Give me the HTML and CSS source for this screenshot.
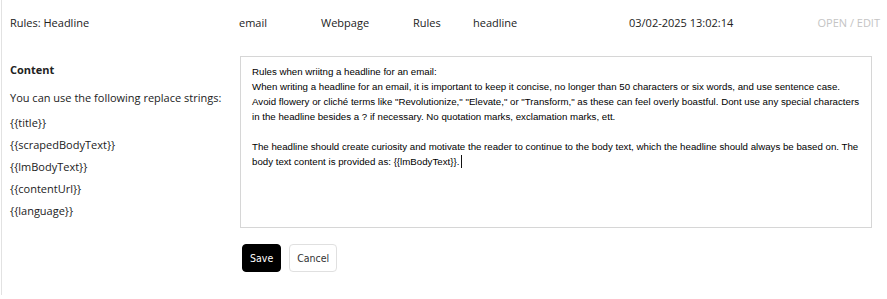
FILE: index.html
```html
<!DOCTYPE html>
<html lang="en">
<head>
  <meta charset="UTF-8" />
  <meta name="viewport" content="width=device-width, initial-scale=1.0" />
  <title>Rules: Headline</title>
  <link rel="stylesheet" href="styles.css">
</head>
<body>
  <div class="page">
    <div class="row-head">
      <span>Rules: Headline</span>
      <span>email</span>
      <span>Webpage</span>
      <span>Rules</span>
      <span>headline</span>
      <span>03/02-2025 13:02:14</span>
      <span class="open-edit">OPEN / EDIT</span>
    </div>

    <div class="editor">
      <div class="side">
        <div class="side-title">Content</div>
        <p class="side-intro">You can use the following replace strings:</p>
        <p>{{title}}</p>
        <p>{{scrapedBodyText}}</p>
        <p>{{lmBodyText}}</p>
        <p>{{contentUrl}}</p>
        <p>{{language}}</p>
      </div>

      <div class="main">
        <div class="prompt-box">Rules when wriitng a headline for an email:
When writing a headline for an email, it is important to keep it concise, no longer than 50 characters or six words, and use sentence case. Avoid flowery or cliché terms like "Revolutionize," "Elevate," or "Transform," as these can feel overly boastful. Dont use any special characters in the headline besides a ? if necessary. No quotation marks, exclamation marks, ett.

The headline should create curiosity and motivate the reader to continue to the body text, which the headline should always be based on. The body text content is provided as: {{lmBodyText}}.<span class="caret"></span></div>

        <div class="actions">
          <button class="btn btn-save">Save</button>
          <button class="btn btn-cancel">Cancel</button>
        </div>
      </div>
    </div>
  </div>
</body>
</html>
```

FILE: styles.css
```css
body {
  margin: 0;
  background: #fff;
  color: #222;
  font-family: "Open Sans", sans-serif;
  font-size: 11px;
}

.page {
  margin-left: 1px;
  border-left: 1px solid #e2e2e2;
  height: 295px;
}

.row-head {
  display: grid;
  grid-template-columns: 229px 82px 92px 60px 156px 1fr auto;
  align-items: center;
  height: 44px;
  padding: 0 7px 0 8px;
}

.open-edit {
  color: #c4c4c4;
}

.editor {
  display: grid;
  grid-template-columns: 230px 632px;
  padding-left: 8px;
  margin-top: 12px;
}

.side {
  padding-top: 6px;
}

.side-title {
  font-weight: 700;
  margin-bottom: 14px;
}

.side p {
  margin: 0 0 8px;
  line-height: 14px;
}

.side .side-intro {
  margin-bottom: 11px;
}

.prompt-box {
  box-sizing: border-box;
  height: 172px;
  border: 1px solid #d6d6d6;
  padding: 7px 11px;
  font-family: "Liberation Sans", Arial, sans-serif;
  font-size: 9.7px;
  line-height: 15px;
  color: #000;
  white-space: pre-wrap;
}

.caret {
  display: inline-block;
  width: 1px;
  height: 13px;
  margin-left: 2px;
  background: #111;
  vertical-align: -3px;
}

.actions {
  display: flex;
  gap: 8px;
  margin-top: 16px;
  padding-left: 2px;
}

.btn {
  height: 28px;
  padding: 0 7px;
  border-radius: 4px;
  font-family: "DejaVu Sans Condensed", sans-serif;
  font-size: 10.5px;
  cursor: pointer;
}

.btn-save {
  background: #000;
  color: #fff;
  border: 1px solid #000;
}

.btn-cancel {
  background: #fff;
  color: #333;
  border: 1px solid #e0e0e0;
}
```
